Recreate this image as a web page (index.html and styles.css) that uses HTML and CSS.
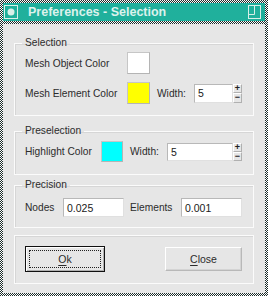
FILE: index.html
```html
<!DOCTYPE html>
<html>
	<head>
		<meta charset="utf-8">
		<title>Preferences - Selection</title>
		<link rel="stylesheet" href="styles.css">
	</head>
	<body>
		<div class="window">
			<div class="titlebar">
				<svg class="tb-icon" width="14" height="14" viewBox="0 0 14 14">
					<rect x="0.5" y="0.5" width="13" height="13" fill="none" stroke="#d8efe8"/>
					<circle cx="7" cy="7" r="3.5" fill="#d8efe8"/>
				</svg>
				<span class="title">Preferences - Selection</span>
				<svg class="tb-icon" width="13" height="14" viewBox="0 0 13 14">
					<rect x="0.5" y="0.5" width="12" height="13" fill="none" stroke="#d8efe8"/>
					<path d="M6.5 1 V9.5 H1" fill="none" stroke="#d8efe8"/>
				</svg>
			</div>
			<div class="client">
				<fieldset class="group sel">
					<legend>Selection</legend>
					<div class="row">
						<span class="label w102">Mesh Object Color</span>
						<span class="swatch" style="background:#ffffff"></span>
					</div>
					<div class="row row2">
						<span class="label w102">Mesh Element Color</span>
						<span class="swatch" style="background:#ffff00"></span>
						<span class="label width">Width:</span>
						<div class="spin s-small">
							<span class="spin-input">5</span>
							<span class="spin-btns"><span class="sb">+</span><span class="sb">−</span></span>
						</div>
					</div>
				</fieldset>

				<fieldset class="group pre">
					<legend>Preselection</legend>
					<div class="row">
						<span class="label w76">Highlight Color</span>
						<span class="swatch sw-small" style="background:#00ffff"></span>
						<span class="label width">Width:</span>
						<div class="spin s-wide">
							<span class="spin-input">5</span>
							<span class="spin-btns"><span class="sb">+</span><span class="sb">−</span></span>
						</div>
					</div>
				</fieldset>

				<fieldset class="group prec">
					<legend>Precision</legend>
					<div class="row">
						<span class="label w38">Nodes</span>
						<span class="field">0.025</span>
						<span class="label elements">Elements</span>
						<span class="field">0.001</span>
					</div>
				</fieldset>

				<div class="group buttons">
					<button class="btn default"><span class="focus"><u>O</u>k</span></button>
					<button class="btn close"><u>C</u>lose</button>
				</div>
			</div>
		</div>
	</body>
</html>
```

FILE: styles.css
```css
html, body {
	margin: 0;
	padding: 0;
}
body {
	font-family: "Liberation Sans", Arial, sans-serif;
	font-size: 10.2px;
	color: #2c2c2c;
}
.window {
	width: 268px;
	height: 296px;
	box-sizing: border-box;
	padding: 3px;
	display: flex;
	flex-direction: column;
	background: repeating-conic-gradient(#1c2c2a 0 25%, #ffffff 0 50%) 0 0 / 2px 2px;
}
.titlebar {
	height: 18px;
	display: flex;
	align-items: center;
	padding: 0 4px 0 1px;
	background: #20b09c;
}
.tb-icon {
	flex: none;
}
.title {
	flex: 1;
	margin-left: 10px;
	font-size: 12.5px;
	font-weight: bold;
	color: #dcf2ec;
}
.client {
	flex: 1;
	margin-top: 3px;
	background: #e6e6e6;
	display: flex;
	flex-direction: column;
}

.group {
	margin: 0 11px;
	padding: 0 11px 0 10px;
	border: 1px solid #fbfbfb;
	box-shadow: 1px 1px 0 #d6d6d6 inset;
	min-width: 0;
}
.group legend {
	margin-left: -3px;
	padding: 0 3px;
	line-height: 12px;
}
.sel {
	margin-top: 13px;
	padding-top: 3px;
	padding-bottom: 11px;
}
.pre {
	margin-top: 9px;
	padding-top: 4px;
	padding-bottom: 12px;
}
.prec {
	margin-top: 4px;
	padding-top: 7px;
	padding-bottom: 10px;
}

.row {
	display: flex;
	align-items: center;
	height: 22px;
}
.row2 {
	margin-top: 8px;
}
.pre .row {
	height: 21px;
}
.prec .row {
	height: 19px;
}
.label {
	flex: none;
	white-space: nowrap;
}
.w102 { width: 102px; }
.w76 { width: 76px; }
.w38 { width: 38px; }
.width {
	width: 37px;
	margin-left: 7px;
}
.elements {
	width: 51px;
	margin-left: 6px;
}
.swatch {
	flex: none;
	width: 21px;
	height: 20px;
	border: 1px solid #c6c6c6;
	border-right-color: #b4b4b4;
	border-bottom-color: #b4b4b4;
}
.sw-small {
	width: 20px;
	height: 19px;
}

.spin {
	display: flex;
	height: 19px;
}
.s-small { width: 49px; }
.s-wide { width: 75px; }
.pre .spin { height: 18px; }
.spin-input, .field {
	flex: 1;
	box-sizing: border-box;
	height: 100%;
	background: #ffffff;
	border: 1px solid #b8b8b8;
	border-right-color: #e0e0e0;
	border-bottom-color: #e0e0e0;
	padding: 0 3px;
	display: flex;
	align-items: center;
	font-size: 10.5px;
	color: #202020;
}
.field {
	flex: none;
	width: 61px;
	height: 19px;
}
.spin-btns {
	width: 9px;
	display: flex;
	flex-direction: column;
}
.sb {
	flex: 1;
	box-sizing: border-box;
	border: 1px solid #ffffff;
	border-right-color: #b0b0b0;
	border-bottom-color: #b0b0b0;
	background: #e6e6e6;
	font-size: 9px;
	font-weight: bold;
	line-height: 7px;
	text-align: center;
	color: #202020;
}

.buttons {
	margin-top: 7px;
	padding: 10px 11px 11px 10px;
	display: flex;
	align-items: center;
	justify-content: space-between;
}
.btn {
	font-family: inherit;
	font-size: 10.5px;
	color: #2c2c2c;
	background: #e6e6e6;
	padding: 0;
	margin: 0;
}
.btn u {
	text-underline-offset: 2px;
}
.default {
	width: 80px;
	height: 26px;
	border: 1px solid #101010;
	box-shadow: inset 1px 1px 0 #ffffff, inset -1px -1px 0 #b0b0b0;
	display: flex;
	padding: 3px;
}
.focus {
	flex: 1;
	border: 1px dotted #202020;
	display: flex;
	align-items: center;
	justify-content: center;
}
.close {
	width: 77px;
	height: 24px;
	border: 1px solid #ffffff;
	border-right-color: #b8b8b8;
	border-bottom-color: #b8b8b8;
	box-shadow: inset -1px -1px 0 #d4d4d4;
}
```
